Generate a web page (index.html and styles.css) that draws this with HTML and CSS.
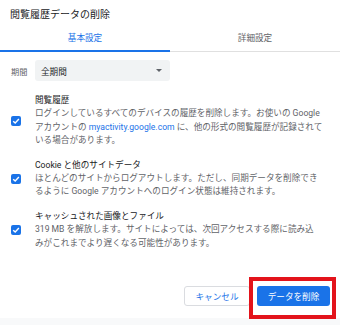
FILE: index.html
```html
<!DOCTYPE html>
<html lang="ja">
<head>
    <meta charset="UTF-8">
    <title>閲覧履歴データの削除</title>
    <link rel="stylesheet" href="styles.css">
</head>
<body>
    <div class="dialog">
        <div class="dialog-title">閲覧履歴データの削除</div>

        <div class="tabs">
            <div class="tab active">基本設定</div>
            <div class="tab">詳細設定</div>
        </div>

        <div class="period-row">
            <span class="period-label">期間</span>
            <div class="select">
                <span>全期間</span>
                <span class="arrow"></span>
            </div>
        </div>

        <div class="items">
            <div class="item">
                <span class="checkbox">
                    <svg viewBox="0 0 10 10" width="10" height="10"><path d="M2.2 5.2 L4.2 7.1 L7.9 3.1" fill="none" stroke="#fff" stroke-width="1.4"/></svg>
                </span>
                <div class="item-text">
                    <div class="item-title">閲覧履歴</div>
                    <div class="item-desc">ログインしているすべてのデバイスの履歴を削除します。お使いの Google<br>アカウントの <span class="link">myactivity.google.com</span> に、他の形式の閲覧履歴が記録されて<br>いる場合があります。</div>
                </div>
            </div>
            <div class="item">
                <span class="checkbox">
                    <svg viewBox="0 0 10 10" width="10" height="10"><path d="M2.2 5.2 L4.2 7.1 L7.9 3.1" fill="none" stroke="#fff" stroke-width="1.4"/></svg>
                </span>
                <div class="item-text">
                    <div class="item-title">Cookie と他のサイトデータ</div>
                    <div class="item-desc">ほとんどのサイトからログアウトします。ただし、同期データを削除でき<br>るように Google アカウントへのログイン状態は維持されます。</div>
                </div>
            </div>
            <div class="item">
                <span class="checkbox">
                    <svg viewBox="0 0 10 10" width="10" height="10"><path d="M2.2 5.2 L4.2 7.1 L7.9 3.1" fill="none" stroke="#fff" stroke-width="1.4"/></svg>
                </span>
                <div class="item-text">
                    <div class="item-title">キャッシュされた画像とファイル</div>
                    <div class="item-desc">319 MB を解放します。サイトによっては、次回アクセスする際に読み込<br>みがこれまでより遅くなる可能性があります。</div>
                </div>
            </div>
        </div>

        <div class="buttons">
            <button class="btn cancel">キャンセル</button>
            <button class="btn primary">データを削除</button>
        </div>
        <div class="footer"></div>

        <!-- red annotation box around the delete button -->
        <div class="highlight"></div>
    </div>
</body>
</html>
```

FILE: styles.css
```css
body {
    margin: 0;
    padding: 0;
    background-color: #fff;
    font-family: Roboto, "Noto Sans CJK JP", sans-serif;
}

.dialog {
    position: relative;
    width: 340px;
    height: 325px;
    display: flex;
    flex-direction: column;
    overflow: hidden;
}

.dialog-title {
    height: 30px;
    line-height: 30px;
    padding-left: 10px;
    font-size: 10px;
    color: #202124;
}

.tabs {
    display: flex;
    border-bottom: 1px solid #e0e0e0;
}

.tab {
    flex: 1;
    text-align: center;
    font-size: 8.6px;
    line-height: 16px;
    padding-bottom: 4px;
    color: #5f6368;
    border-bottom: 2px solid transparent;
    margin-bottom: -1px;
}

.tab.active {
    color: #1a73e8;
    border-bottom-color: #1a73e8;
}

.period-row {
    display: flex;
    align-items: center;
    margin-top: 8px;
    padding-left: 11px;
}

.period-label {
    width: 24px;
    font-size: 8.2px;
    color: #5f6368;
}

.select {
    width: 135px;
    height: 21px;
    box-sizing: border-box;
    background-color: #f1f3f4;
    border-radius: 3px;
    padding: 0 6px;
    display: flex;
    align-items: center;
    justify-content: space-between;
    font-size: 8.6px;
    color: #202124;
}

.arrow {
    width: 0;
    height: 0;
    border-left: 3px solid transparent;
    border-right: 3px solid transparent;
    border-top: 3px solid #5f6368;
    margin-right: 2px;
}

.items {
    margin-top: 13px;
    display: flex;
    flex-direction: column;
    gap: 11.5px;
}

.item {
    display: flex;
    align-items: center;
    padding-left: 11px;
}

.checkbox {
    width: 10px;
    height: 10px;
    border-radius: 2px;
    background-color: #1a73e8;
    margin-right: 14px;
    flex-shrink: 0;
}

.checkbox svg {
    display: block;
}

.item-text {
    font-size: 8.6px;
    line-height: 13.3px;
    white-space: nowrap;
}

.item-title {
    color: #202124;
}

.item-desc {
    color: #5f6368;
}

.link {
    color: #1a73e8;
}

.buttons {
    margin-top: auto;
    display: flex;
    justify-content: flex-end;
    gap: 7px;
    padding-right: 10px;
    margin-bottom: 12px;
}

.btn {
    height: 20px;
    border-radius: 3px;
    font-family: Roboto, "Noto Sans CJK JP", sans-serif;
    font-size: 8.6px;
    padding: 0;
    cursor: pointer;
}

.cancel {
    width: 66px;
    background-color: #fff;
    color: #1a73e8;
    border: 1px solid #dadce0;
}

.primary {
    width: 73px;
    background-color: #1a73e8;
    color: #fff;
    border: none;
}

.footer {
    height: 7px;
    background-color: #f8f9fa;
}

.highlight {
    position: absolute;
    left: 249px;
    top: 277px;
    width: 87px;
    height: 42px;
    box-sizing: border-box;
    border: 4px solid #e3131b;
}
```
